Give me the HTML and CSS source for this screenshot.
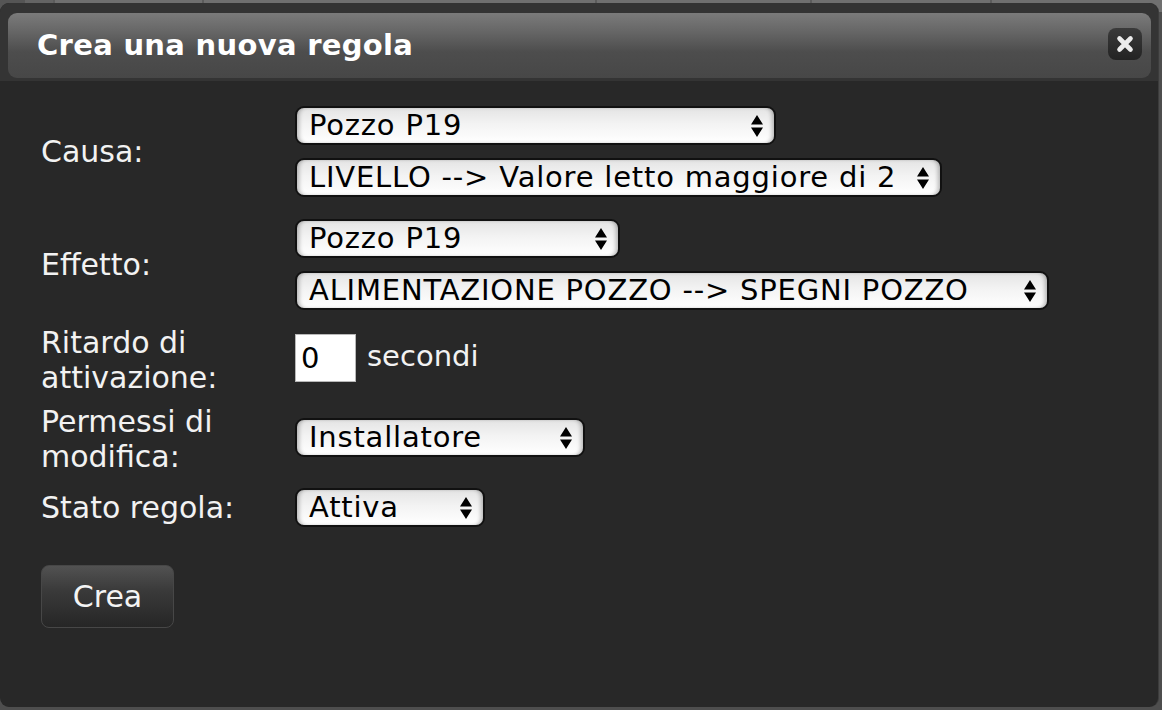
FILE: index.html
```html
<!DOCTYPE html>
<html lang="it">
<head>
<meta charset="utf-8">
<title>Crea una nuova regola</title>
<link rel="stylesheet" href="styles.css">
</head>
<body>
<div class="page-header">
  <div class="ph-cell ph-a"></div>
  <div class="ph-cell ph-b"></div>
  <div class="ph-cell ph-c"></div>
  <div class="ph-cell ph-d"></div>
  <div class="ph-cell ph-e"></div>
  <div class="ph-cell ph-f"></div>
  <div class="ph-cell ph-g"></div>
</div>

<div class="dialog">
  <div class="dialog-head">
    <div class="titlebar">
      <span class="title">Crea una nuova regola</span>
      <button class="close" type="button" aria-label="Chiudi">
        <svg width="18" height="18" viewBox="0 0 18 18"><path d="M3.5 3.5 L14.5 14.5 M14.5 3.5 L3.5 14.5" stroke="#ececec" stroke-width="4.6" stroke-linecap="round"/></svg>
      </button>
    </div>
  </div>

  <div class="dialog-body">
    <div class="row row-causa">
      <div class="label">Causa:</div>
      <div class="fields">
        <div class="select w-481"><span class="sel-text">Pozzo P19</span><svg class="arrows" width="12" height="22" viewBox="0 0 12 22"><path d="M0 9.5 L6 0 L12 9.5 Z M0 12.5 L12 12.5 L6 22 Z" fill="#000"/></svg></div>
        <div class="select w-647"><span class="sel-text">LIVELLO --&gt; Valore letto maggiore di 2</span><svg class="arrows" width="12" height="22" viewBox="0 0 12 22"><path d="M0 9.5 L6 0 L12 9.5 Z M0 12.5 L12 12.5 L6 22 Z" fill="#000"/></svg></div>
      </div>
    </div>

    <div class="row row-effetto">
      <div class="label">Effetto:</div>
      <div class="fields">
        <div class="select w-325"><span class="sel-text">Pozzo P19</span><svg class="arrows" width="12" height="22" viewBox="0 0 12 22"><path d="M0 9.5 L6 0 L12 9.5 Z M0 12.5 L12 12.5 L6 22 Z" fill="#000"/></svg></div>
        <div class="select w-754"><span class="sel-text">ALIMENTAZIONE POZZO --&gt; SPEGNI POZZO</span><svg class="arrows" width="12" height="22" viewBox="0 0 12 22"><path d="M0 9.5 L6 0 L12 9.5 Z M0 12.5 L12 12.5 L6 22 Z" fill="#000"/></svg></div>
      </div>
    </div>

    <div class="row row-ritardo">
      <div class="label">Ritardo di<br>attivazione:</div>
      <div class="inline-field field-ritardo">
        <input class="num" type="text" value="0">
        <span class="unit">secondi</span>
      </div>
    </div>

    <div class="row row-permessi">
      <div class="label">Permessi di<br>modifica:</div>
      <div class="inline-field field-permessi">
        <div class="select w-290"><span class="sel-text">Installatore</span><svg class="arrows" width="12" height="22" viewBox="0 0 12 22"><path d="M0 9.5 L6 0 L12 9.5 Z M0 12.5 L12 12.5 L6 22 Z" fill="#000"/></svg></div>
      </div>
    </div>

    <div class="row row-stato">
      <div class="label">Stato regola:</div>
      <div class="inline-field">
        <div class="select w-190"><span class="sel-text">Attiva</span><svg class="arrows" width="12" height="22" viewBox="0 0 12 22"><path d="M0 9.5 L6 0 L12 9.5 Z M0 12.5 L12 12.5 L6 22 Z" fill="#000"/></svg></div>
      </div>
    </div>

    <button class="btn-crea" type="button">Crea</button>
  </div>
</div>
</body>
</html>
```

FILE: styles.css
```css
html, body {
  margin: 0;
  padding: 0;
}

body {
  width: 1162px;
  height: 710px;
  background: #4e4e4e;
  position: relative;
  overflow: hidden;
  font-family: "DejaVu Sans", Verdana, sans-serif;
}

/* page behind the dialog (only its top edge is visible) */
.page-header {
  display: flex;
  height: 12px;
}

.ph-cell {
  height: 100%;
  border-right: 2px solid #5c5c5c;
  background: #707070;
}

.ph-a { width: 25px; background: #555; border-right: none; }
.ph-b { width: 28px; background: #646464; }
.ph-c { width: 147px; }
.ph-d { width: 391px; }
.ph-e { width: 213px; }
.ph-f { width: 178px; }
.ph-g { flex: 1; border-right: none; }

/* dialog overlay */
.dialog {
  position: absolute;
  left: 0;
  top: 3px;
  width: 1158px;
  height: 704px;
  background: #282828;
  border-radius: 9px;
  box-shadow: 1px 0 0 #3c3c3c;
  overflow: hidden;
}

.dialog-head {
  background: #343434;
  padding: 10px 7px 3px 8px;
}

.titlebar {
  height: 65px;
  border-radius: 9px;
  background: linear-gradient(to bottom, #7b7b7b 0%, #656565 30%, #4d4d4d 60%, #474747 100%);
  display: flex;
  align-items: center;
  justify-content: space-between;
  padding: 0 9px 0 29px;
}

.title {
  color: #ffffff;
  font-weight: bold;
  font-size: 29px;
  letter-spacing: 0.3px;
  margin-top: -1px;
}

.close {
  width: 34px;
  height: 32px;
  margin-top: -3px;
  border: none;
  border-radius: 8px;
  background: linear-gradient(to bottom, #3a3a3a, #232323);
  display: flex;
  align-items: center;
  justify-content: center;
  padding: 0;
}

.dialog-body {
  padding: 25px 0 0 41px;
}

.row {
  display: flex;
  align-items: center;
}

.label {
  width: 254px;
  flex: none;
  color: #f2f2f2;
  font-size: 30px;
  line-height: 35px;
}

.fields {
  display: flex;
  flex-direction: column;
  align-items: flex-start;
  gap: 13px;
}

.row-effetto { margin-top: 22px; }
.row-ritardo { margin-top: 15px; align-items: flex-start; }
.row-permessi { margin-top: 9px; align-items: flex-start; }
.row-stato { margin-top: 14px; }

.field-ritardo { margin-top: 9px; }
.field-permessi { margin-top: 14px; }

.inline-field {
  display: flex;
  align-items: center;
}

.select {
  box-sizing: border-box;
  height: 39px;
  border: 2px solid #111;
  border-radius: 9px;
  background: linear-gradient(to bottom, #e4e4e4 0%, #f3f3f3 45%, #ffffff 100%);
  box-shadow: inset 4px 0 4px -2px rgba(0, 0, 0, 0.28), inset -4px 0 4px -2px rgba(0, 0, 0, 0.28);
  display: flex;
  align-items: center;
  justify-content: space-between;
  padding: 0 11px 0 12px;
  color: #000;
  font-size: 29px;
  letter-spacing: 0.8px;
  white-space: nowrap;
}

.sel-text {
  line-height: 1;
}

.arrows {
  flex: none;
}

.w-481 { width: 481px; }
.w-647 { width: 647px; }
.w-325 { width: 325px; }
.w-754 { width: 754px; }
.w-290 { width: 290px; }
.w-190 { width: 190px; }

.num {
  box-sizing: border-box;
  width: 61px;
  height: 48px;
  margin: 0;
  border: 1px solid #b8b8b8;
  background: #fff;
  color: #000;
  font-family: "DejaVu Sans", Verdana, sans-serif;
  font-size: 29px;
  padding: 0 0 0 5px;
  outline: none;
}

.unit {
  color: #f2f2f2;
  font-size: 29px;
  margin-left: 11px;
  margin-top: -4px;
}

.btn-crea {
  display: block;
  margin-top: 38px;
  width: 133px;
  height: 63px;
  border: 1px solid #474747;
  border-radius: 8px;
  background: linear-gradient(to bottom, #525252 0%, #3a3a3a 40%, #262626 100%);
  color: #f4f4f4;
  font-family: "DejaVu Sans", Verdana, sans-serif;
  font-size: 30px;
  padding: 0;
}
```
